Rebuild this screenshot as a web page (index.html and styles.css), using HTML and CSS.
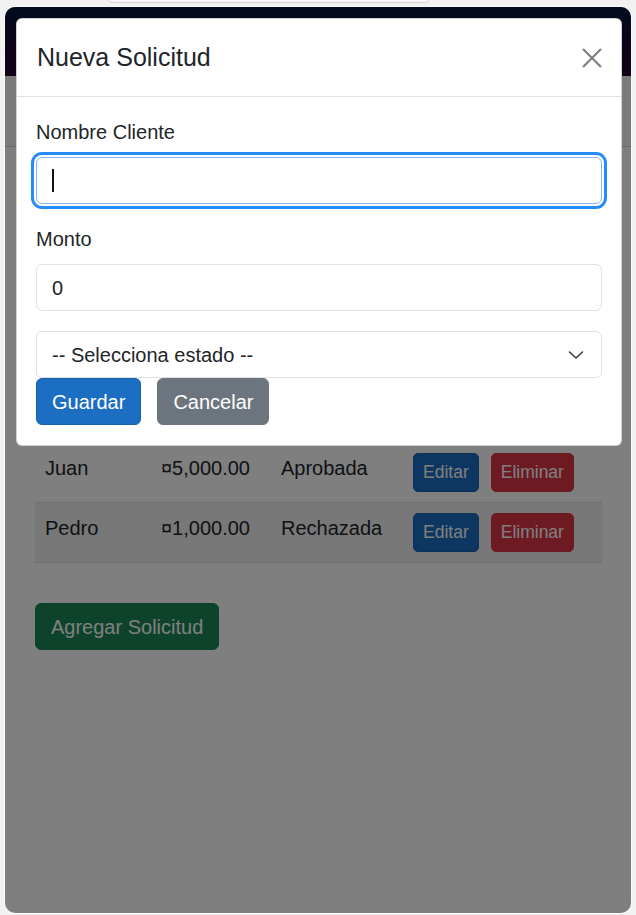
FILE: index.html
```html
<!DOCTYPE html>
<html lang="es">
<head>
<meta charset="utf-8">
<title>Solicitudes</title>
<link rel="stylesheet" href="styles.css">
</head>
<body>
<div class="tab-pill"></div>
<div class="window">
  <div class="sidebar-top"></div>
  <div class="main-top"></div>
  <div class="content">
    <div class="page-head"></div>
    <table class="table">
      <colgroup><col class="c1"><col class="c2"><col class="c3"><col class="c4"></colgroup>
      <tbody>
        <tr>
          <td>Juan</td><td>¤5,000.00</td><td>Aprobada</td>
          <td><div class="actions"><button class="btn btn-sm btn-primary">Editar</button><button class="btn btn-sm btn-danger">Eliminar</button></div></td>
        </tr>
        <tr class="striped">
          <td>Pedro</td><td>¤1,000.00</td><td>Rechazada</td>
          <td><div class="actions"><button class="btn btn-sm btn-primary">Editar</button><button class="btn btn-sm btn-danger">Eliminar</button></div></td>
        </tr>
      </tbody>
    </table>
    <button class="btn btn-success add-btn">Agregar Solicitud</button>
  </div>

  <div class="backdrop"></div>

  <div class="modal">
    <div class="modal-header">
      <h5 class="modal-title">Nueva Solicitud</h5>
      <button class="btn-close" aria-label="Cerrar">
        <svg width="20" height="20" viewBox="0 0 20 20"><path d="M1 1 L19 19 M19 1 L1 19" stroke="#000" stroke-width="2.1" fill="none"/></svg>
      </button>
    </div>
    <div class="modal-body">
      <div class="field">
        <label class="form-label">Nombre Cliente</label>
        <div class="form-control focused"><span class="caret"></span></div>
      </div>
      <div class="field">
        <label class="form-label">Monto</label>
        <div class="form-control">0</div>
      </div>
      <div class="form-select">
        <span>-- Selecciona estado --</span>
        <svg class="chev" width="16" height="10" viewBox="0 0 16 10"><path d="M1.5 2 L8 8 L14.5 2" stroke="#343a40" stroke-width="1.6" fill="none" stroke-linecap="round" stroke-linejoin="round"/></svg>
      </div>
      <div class="modal-actions">
        <button class="btn btn-primary">Guardar</button>
        <button class="btn btn-secondary">Cancelar</button>
      </div>
    </div>
  </div>
</div>
</body>
</html>
```
FILE: styles.css
```css
* { box-sizing: border-box; }
html, body { margin: 0; padding: 0; }
body {
  background: #f1f1f1;
  font-family: "Liberation Sans", Arial, sans-serif;
  color: #212529;
  width: 636px;
  height: 915px;
  overflow: hidden;
  display: flex;
  flex-direction: column;
  align-items: flex-start;
}
.tab-pill {
  width: 326px;
  height: 14px;
  margin: -11px 0 0 106px;
  border: 1px solid #d4d4d4;
  border-radius: 10px;
  background: #f7f7f7;
}
.window {
  position: relative;
  margin: 4px 0 0 5px;
  width: 626px;
  height: 906px;
  border-radius: 10px;
  overflow: hidden;
  background: #fff;
  box-shadow: 0 0 0 1px #fafafa;
}
.sidebar-top {
  height: 69px;
  background: linear-gradient(180deg, rgb(3, 23, 62) 0, rgb(35, 4, 43) 49px, rgb(35, 4, 43) 69px);
}
.main-top {
  height: 71px;
  background: #f7f7f7;
  border-bottom: 1px solid #d6d5d5;
}
.content {
  padding: 22px 30px 0 30px;
}
.page-head {
  height: 274px;
}
.table {
  width: 567px;
  border-collapse: collapse;
  font-size: 20px;
  margin-bottom: 40px;
  table-layout: fixed;
}
.table td {
  text-align: left;
  vertical-align: top;
  padding: 10px;
  line-height: 30px;
  border-bottom: 1px solid #dee2e6;
}
.c1 { width: 116px; }
.c2 { width: 120px; }
.c3 { width: 132px; }
.striped td { background: #f0f0f0; }
.actions { display: flex; gap: 12px; }
.btn {
  font-family: inherit;
  font-size: 20px;
  line-height: 30px;
  padding: 7.5px 15px;
  border: 1px solid transparent;
  border-radius: 6px;
  color: #fff;
  cursor: pointer;
}
.btn-sm {
  font-size: 17.5px;
  line-height: 27px;
  padding: 5px 9px;
  border-radius: 5px;
}
.btn-primary { background: #1b6ec2; border-color: #1861ac; }
.btn-danger { background: #dc3545; border-color: #dc3545; }
.btn-secondary { background: #6c757d; border-color: #6c757d; }
.btn-success { background: #198754; border-color: #198754; }
.add-btn { display: block; }

.backdrop {
  position: absolute;
  inset: 0;
  background: rgba(0, 0, 0, 0.5);
}
.modal {
  position: absolute;
  top: 11px;
  left: 11px;
  width: 606px;
  background: #fff;
  border: 1px solid rgba(0, 0, 0, 0.175);
  border-radius: 6px;
}
.modal-header {
  display: flex;
  align-items: center;
  justify-content: space-between;
  padding: 20px;
  border-bottom: 1px solid #dee2e6;
}
.modal-title {
  margin: 0;
  font-size: 25px;
  font-weight: 400;
  line-height: 37px;
}
.btn-close {
  width: 30px;
  height: 30px;
  padding: 5px;
  margin-right: -6px;
  border: 0;
  background: transparent;
  opacity: 0.5;
  display: flex;
  align-items: center;
  justify-content: center;
}
.modal-body { padding: 20px 19px; }
.field { margin-bottom: 20px; }
.form-label {
  display: block;
  font-size: 20px;
  line-height: 30px;
  margin-bottom: 10px;
}
.form-control, .form-select {
  height: 47px;
  border: 1px solid #dee2e6;
  border-radius: 6px;
  padding: 7.5px 15px;
  font-size: 20px;
  line-height: 30px;
  background: #fff;
}
.form-control.focused {
  border-color: #86b7fe;
  box-shadow: 0 0 0 2px #fff, 0 0 0 5px #258cfb;
  display: flex;
  align-items: center;
}
.caret {
  display: block;
  width: 1.5px;
  height: 23px;
  background: #111;
}
.form-select {
  display: flex;
  align-items: center;
  justify-content: space-between;
}
.chev { margin-right: 2px; }
.modal-actions {
  display: flex;
  gap: 16px;
}
```
